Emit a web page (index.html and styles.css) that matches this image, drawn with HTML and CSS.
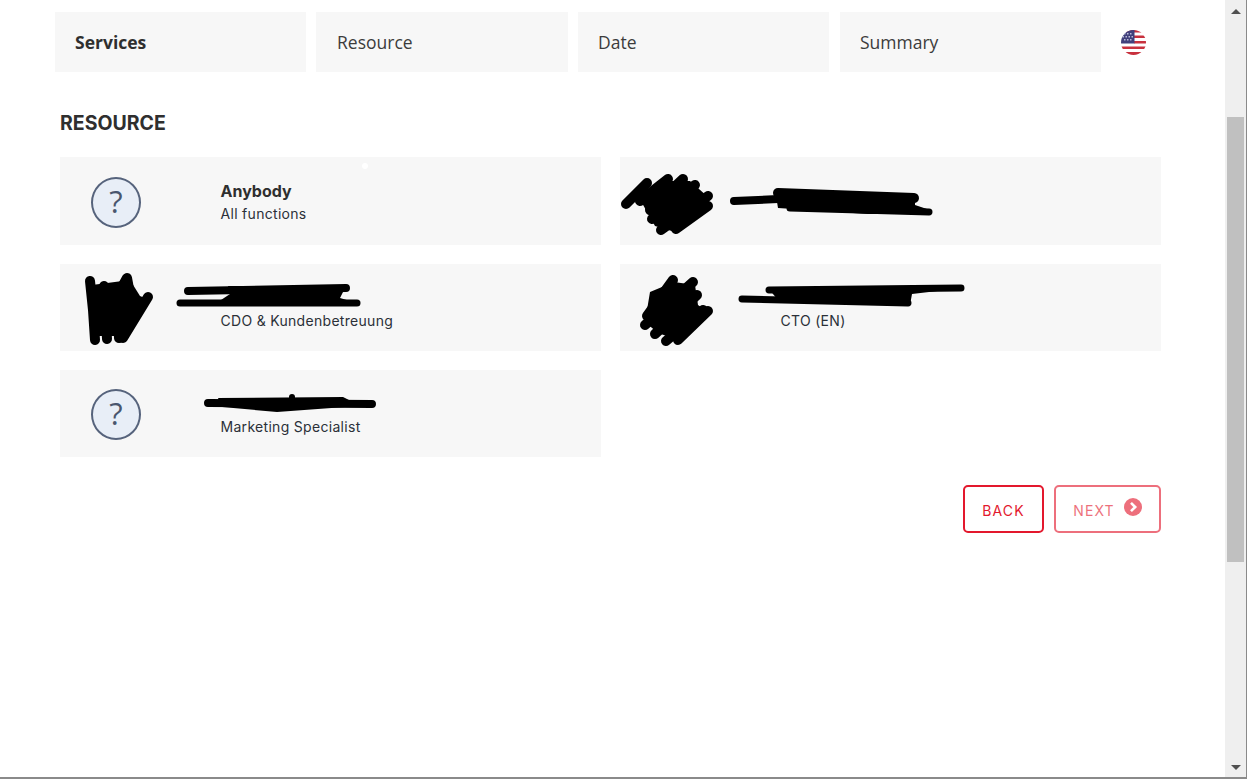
FILE: index.html
```html
<!DOCTYPE html>
<html lang="en">
<head>
<meta charset="utf-8">
<title>Booking - Resource</title>
<link rel="stylesheet" href="styles.css">
</head>
<body>
<div class="window">
  <main class="page">
    <nav class="steps">
      <div class="step step-active">Services</div>
      <div class="step step-second">Resource</div>
      <div class="step">Date</div>
      <div class="step step-last">Summary</div>
      <svg class="flag" viewBox="0 0 25 25" aria-label="English">
        <defs><clipPath id="flagclip"><circle cx="12.5" cy="12.5" r="12.5"/></clipPath></defs>
        <g clip-path="url(#flagclip)">
          <rect width="25" height="25" fill="#fff"/>
          <rect y="0" width="25" height="2.5" fill="#c8313e"/>
          <rect x="13" y="5.5" width="12" height="2.5" fill="#c8313e"/>
          <rect x="13" y="11" width="12" height="2.5" fill="#c8313e"/>
          <rect y="16.5" width="25" height="2.5" fill="#c8313e"/>
          <rect y="22" width="25" height="3" fill="#c8313e"/>
          <rect width="13.5" height="13.5" fill="#41407c"/>
          <g fill="#b9bad6">
            <rect x="3" y="3" width="1.5" height="1.5"/><rect x="6" y="3" width="1.5" height="1.5"/><rect x="9" y="3" width="1.5" height="1.5"/>
            <rect x="1.5" y="6" width="1.5" height="1.5"/><rect x="4.5" y="6" width="1.5" height="1.5"/><rect x="7.5" y="6" width="1.5" height="1.5"/><rect x="10.5" y="6" width="1.5" height="1.5"/>
            <rect x="3" y="9" width="1.5" height="1.5"/><rect x="6" y="9" width="1.5" height="1.5"/><rect x="9" y="9" width="1.5" height="1.5"/>
          </g>
        </g>
      </svg>
    </nav>

    <section class="content">
      <h1 class="title">RESOURCE</h1>
      <div class="cards">
        <article class="card">
          <span class="dot"></span>
          <div class="avatar"><div class="unknown">?</div></div>
          <div class="info"><div class="name">Anybody</div><div class="role">All functions</div></div>
        </article>
        <article class="card">
          <div class="avatar"></div>
          <div class="info"><div class="name">&nbsp;</div><div class="role">&nbsp;</div></div>
        </article>
        <article class="card">
          <div class="avatar"></div>
          <div class="info"><div class="name">&nbsp;</div><div class="role">CDO &amp; Kundenbetreuung</div></div>
        </article>
        <article class="card">
          <div class="avatar"></div>
          <div class="info"><div class="name">&nbsp;</div><div class="role">CTO (EN)</div></div>
        </article>
        <article class="card">
          <div class="avatar"><div class="unknown">?</div></div>
          <div class="info"><div class="name">&nbsp;</div><div class="role">Marketing Specialist</div></div>
        </article>
      </div>
      <div class="actions">
        <button class="btn">BACK</button>
        <button class="btn btn-next">NEXT
          <svg class="next-icon" viewBox="0 0 18 18"><circle cx="9" cy="9" r="9" fill="currentColor"/><path d="M7 4.8 11.2 9 7 13.2" fill="none" stroke="#fff" stroke-width="2.6"/></svg>
        </button>
      </div>
    </section>
  </main>

  <aside class="scrollbar">
    <div class="arrow-up"></div>
    <div class="thumb"></div>
    <div class="arrow-down"></div>
  </aside>

  <svg class="redactions" viewBox="0 0 1247 779" aria-hidden="true">
    <g fill="none" stroke="#000" stroke-linejoin="round" stroke-linecap="round">
      <g fill="#000" stroke="none">
        <path d="M642 203 668 181 690 181 708 197 704 212 675 232 655 226Z"/>
        <path d="M92 285 130 280 140 296 147 299 122 336 94 336Z"/>
        <path d="M650 292 674 282 695 285 698 305 708 312 678 340 658 333 645 322Z"/>
        <path d="M775 190 915 196 915 205 930 210 930 214 868 214 778 208Z"/>
        <path d="M228 286 346 286 340 298 357 303 260 306 218 302 230 294Z"/>
        <path d="M768 288 963 288 912 294 910 305 860 305 778 300Z"/>
        <path d="M218 398 343 397 355 403 345 407 277 412 222 407Z"/>
      </g>
      <g stroke-width="10">
        <path d="M626 204 647 183"/>
        <path d="M640 201 668 179"/>
        <path d="M650 210 683 179"/>
        <path d="M652 219 695 185"/>
        <path d="M661 230 708 196"/>
        <path d="M676 229 708 206"/>

        <path d="M90 281 93 310 95 340"/>
        <path d="M104 286 107 339"/>
        <path d="M117 293 119 338"/>
        <path d="M115 300 127 278 131 300 128 320"/>
        <path d="M148 297 123 338"/>

        <path d="M647 316 673 280"/>
        <path d="M645 325 693 282"/>
        <path d="M655 334 697 295"/>
        <path d="M666 341 703 310"/>
        <path d="M678 340 708 311"/>
      </g>

      <path stroke-width="8" d="M734 201 778 199"/>
      <path stroke-width="10" d="M778 193 914 198"/>
      <path stroke-width="7" d="M790 208 929 212"/>

      <path stroke-width="8" d="M188 291 346 288"/>
      <path stroke-width="7" d="M180 303 357 303"/>

      <path stroke-width="7" d="M769 290 961 288"/>
      <path stroke-width="7" d="M742 299 908 303"/>

      <path stroke-width="8" d="M208 403 372 404"/>
      <path stroke-width="6" d="M292 397 292 405"/>
    </g>
  </svg>
</div>
</body>
</html>
```

FILE: styles.css
```css
* {
  box-sizing: border-box;
}

html,
body {
  margin: 0;
  height: 100%;
  overflow: hidden;
  background: #fff;
}

.window {
  position: relative;
  display: flex;
  width: 1247px;
  height: 779px;
  border-bottom: 2px solid #8a8a8a;
  border-right: 1px solid #8a8a8a;
}

.page {
  flex: 1;
  padding: 12px 64px 0 55px;
  min-width: 0;
}

.steps {
  display: grid;
  grid-template-columns: 251px 252px 251px 262px 35px;
  column-gap: 10px;
  align-items: center;
}

.step {
  height: 60px;
  padding-left: 20px;
  padding-bottom: 1px;
  display: flex;
  align-items: center;
  background: #f7f7f7;
  color: #3c3c3c;
  font: 400 17.5px "Open Sans", sans-serif;
}

.step-second {
  padding-left: 21px;
}

.step-last {
  margin-left: 1px;
}

.step-active {
  font-weight: 700;
  color: #2f2f2f;
}

.flag {
  width: 25px;
  height: 25px;
  margin-left: 10px;
}

.content {
  padding-left: 5px;
}

.title {
  margin: 39px 0 22px;
  height: 24px;
  color: #2f2f2f;
  font: 700 19.5px/24px "Inter", sans-serif;
}

.cards {
  display: grid;
  grid-template-columns: 541px 541px;
  grid-template-rows: 88px 87px 87px;
  gap: 19px;
}

.card {
  position: relative;
  display: flex;
  align-items: center;
  padding-left: 31px;
  background: #f7f7f7;
}

.dot {
  position: absolute;
  left: 302px;
  top: 6px;
  width: 6px;
  height: 6px;
  border-radius: 50%;
  background: #fff;
}

.avatar {
  width: 50px;
  height: 51px;
  margin-top: 2px;
  margin-right: 79.5px;
  flex: none;
}

.unknown {
  width: 50px;
  height: 51px;
  border: 2px solid #56637c;
  border-radius: 50%;
  background: #e8eef7;
  color: #4a566e;
  text-align: center;
  font: 400 31px/45px "Open Sans", sans-serif;
}

.info {
  padding-top: 4px;
  color: #2b3038;
  font-family: "Inter", sans-serif;
}

.name {
  font-size: 16px;
  font-weight: 700;
  line-height: 22px;
  color: #2f2f2f;
}

.role {
  font-size: 14px;
  line-height: 24px;
  letter-spacing: 0.3px;
}

.actions {
  display: flex;
  justify-content: flex-end;
  gap: 10px;
  margin-top: 28px;
}

.btn {
  display: flex;
  align-items: center;
  justify-content: center;
  height: 48px;
  width: 81px;
  padding: 2px 0 0;
  background: #fff;
  border: 2px solid #e3182d;
  border-radius: 5px;
  color: #e3182d;
  letter-spacing: 1.1px;
  font: 400 14px "Inter", sans-serif;
}

.btn-next {
  width: 107px;
  gap: 9px;
  opacity: 0.62;
}

.next-icon {
  width: 18px;
  height: 18px;
  margin-top: -6px;
}

.scrollbar {
  position: relative;
  flex: none;
  width: 21px;
  background: #efefef;
}

.arrow-up,
.arrow-down {
  position: absolute;
  left: 6px;
  width: 0;
  height: 0;
  border-left: 5px solid transparent;
  border-right: 5px solid transparent;
}

.arrow-up {
  top: 9px;
  border-bottom: 5px solid #505050;
}

.arrow-down {
  bottom: 7px;
  border-top: 5px solid #505050;
}

.thumb {
  position: absolute;
  left: 2px;
  top: 117px;
  width: 17px;
  height: 445px;
  background: #c0c0c0;
}

.redactions {
  position: absolute;
  left: 0;
  top: 0;
  width: 1247px;
  height: 779px;
  pointer-events: none;
}
```
